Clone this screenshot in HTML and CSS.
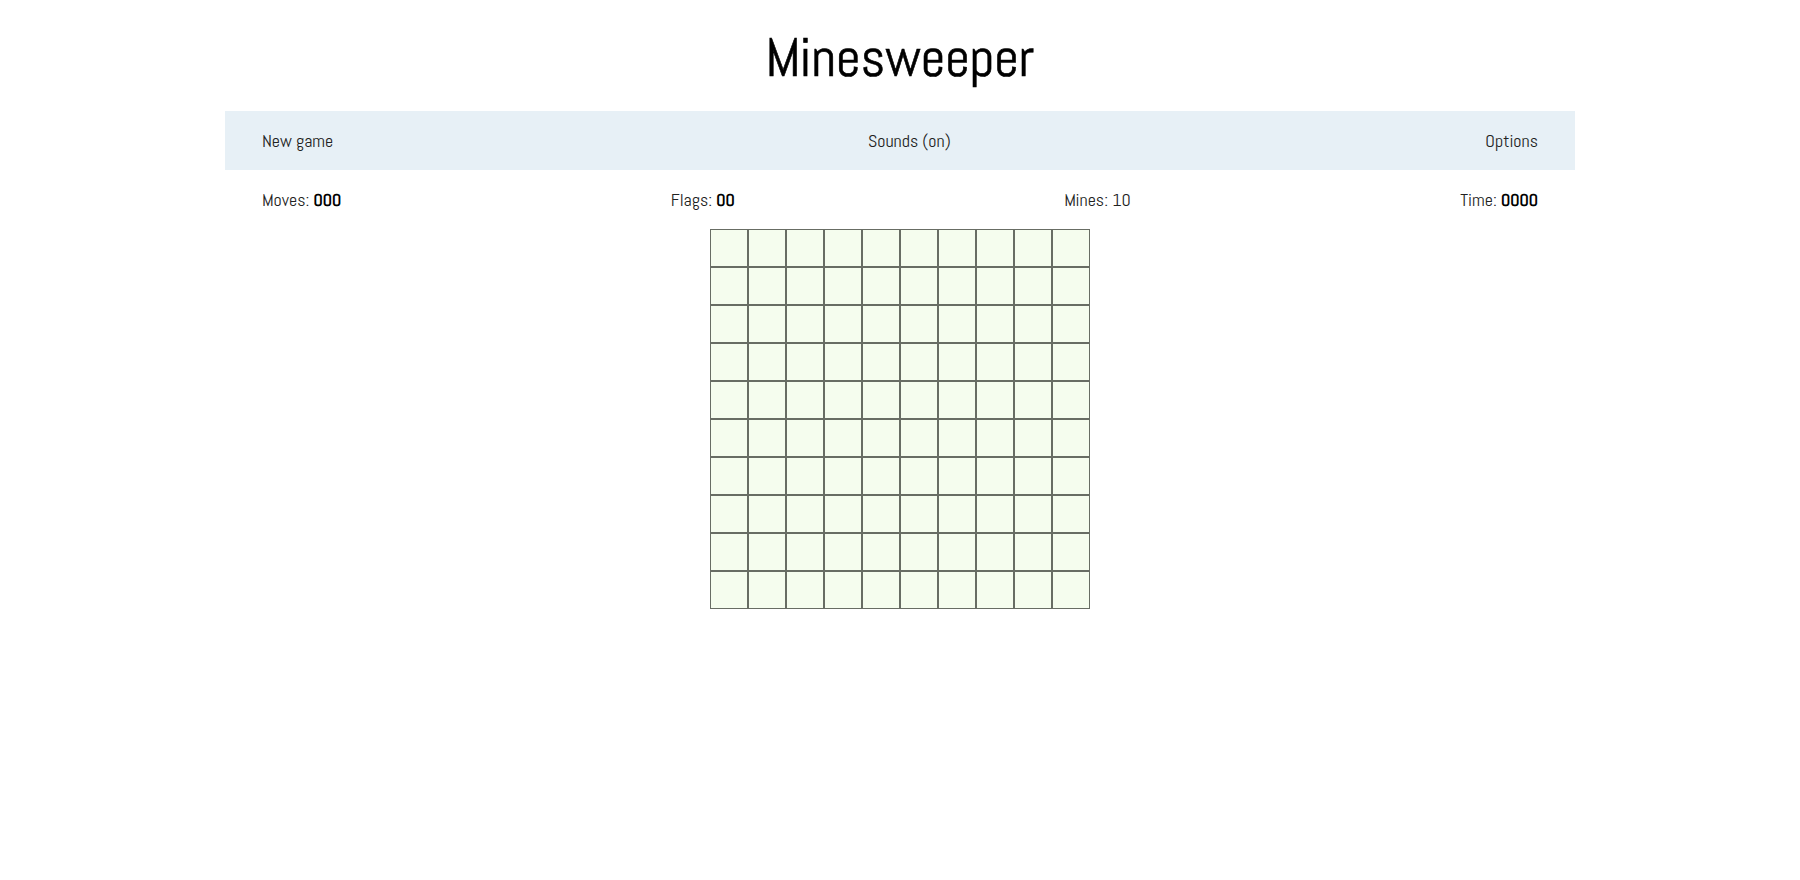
FILE: index.html
```html
<!DOCTYPE html>
<html>
<head>
<meta charset="utf-8">
<title>Minesweeper</title>
<link rel="stylesheet" href="styles.css">
</head>
<body>
<h1 class="title">Minesweeper</h1>
<nav class="menu">
  <span class="menu-item">New game</span>
  <span class="menu-item">Sounds (on)</span>
  <span class="menu-item">Options</span>
</nav>
<div class="stats">
  <span class="stat">Moves: <b class="val">000</b></span>
  <span class="stat">Flags: <b class="val">00</b></span>
  <span class="stat">Mines: 10</span>
  <span class="stat">Time: <b class="val">0000</b></span>
</div>
<div class="board">
  <div class="cell"></div><div class="cell"></div><div class="cell"></div><div class="cell"></div><div class="cell"></div><div class="cell"></div><div class="cell"></div><div class="cell"></div><div class="cell"></div><div class="cell"></div>
  <div class="cell"></div><div class="cell"></div><div class="cell"></div><div class="cell"></div><div class="cell"></div><div class="cell"></div><div class="cell"></div><div class="cell"></div><div class="cell"></div><div class="cell"></div>
  <div class="cell"></div><div class="cell"></div><div class="cell"></div><div class="cell"></div><div class="cell"></div><div class="cell"></div><div class="cell"></div><div class="cell"></div><div class="cell"></div><div class="cell"></div>
  <div class="cell"></div><div class="cell"></div><div class="cell"></div><div class="cell"></div><div class="cell"></div><div class="cell"></div><div class="cell"></div><div class="cell"></div><div class="cell"></div><div class="cell"></div>
  <div class="cell"></div><div class="cell"></div><div class="cell"></div><div class="cell"></div><div class="cell"></div><div class="cell"></div><div class="cell"></div><div class="cell"></div><div class="cell"></div><div class="cell"></div>
  <div class="cell"></div><div class="cell"></div><div class="cell"></div><div class="cell"></div><div class="cell"></div><div class="cell"></div><div class="cell"></div><div class="cell"></div><div class="cell"></div><div class="cell"></div>
  <div class="cell"></div><div class="cell"></div><div class="cell"></div><div class="cell"></div><div class="cell"></div><div class="cell"></div><div class="cell"></div><div class="cell"></div><div class="cell"></div><div class="cell"></div>
  <div class="cell"></div><div class="cell"></div><div class="cell"></div><div class="cell"></div><div class="cell"></div><div class="cell"></div><div class="cell"></div><div class="cell"></div><div class="cell"></div><div class="cell"></div>
  <div class="cell"></div><div class="cell"></div><div class="cell"></div><div class="cell"></div><div class="cell"></div><div class="cell"></div><div class="cell"></div><div class="cell"></div><div class="cell"></div><div class="cell"></div>
  <div class="cell"></div><div class="cell"></div><div class="cell"></div><div class="cell"></div><div class="cell"></div><div class="cell"></div><div class="cell"></div><div class="cell"></div><div class="cell"></div><div class="cell"></div>
</div>
</body>
</html>
```
FILE: styles.css
```css
html, body {
  margin: 0;
  padding: 0;
  background: #ffffff;
}
body {
  font-family: "Abel", "Roboto Condensed", sans-serif;
  font-size: 18px;
  color: #222;
}
.title {
  margin: 0;
  padding: 28px 0 23px;
  font-size: 54px;
  line-height: 60px;
  font-weight: normal;
  text-align: center;
  color: #000;
  -webkit-text-stroke: 0.6px #000;
}
.menu {
  width: 75%;
  margin: 0 auto;
  box-sizing: border-box;
  display: flex;
  justify-content: space-between;
  padding: 17px 37px;
  background: #e7f0f6;
  line-height: 25px;
}
.stats {
  width: 75%;
  margin: 0 auto;
  box-sizing: border-box;
  display: flex;
  justify-content: space-between;
  padding: 17px 37px;
  line-height: 25px;
}
.val {
  font-weight: bold;
  color: #000;
}
.board {
  display: grid;
  grid-template-columns: repeat(10, 38px);
  grid-auto-rows: 38px;
  width: 380px;
  margin: 0 auto;
}
.cell {
  box-sizing: border-box;
  border: 1px solid #686d64;
  background: #f5fdee;
}
```
